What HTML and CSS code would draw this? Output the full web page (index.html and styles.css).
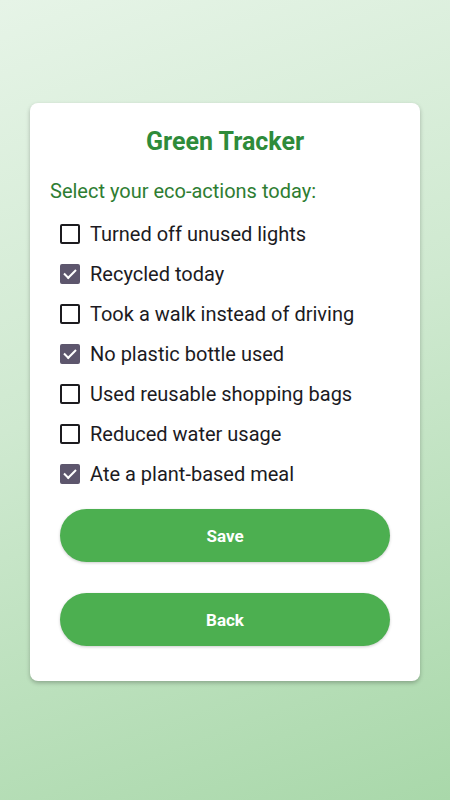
FILE: index.html
```html
<!DOCTYPE html>
<html lang="en">
<head>
    <meta charset="UTF-8">
    <meta name="viewport" content="width=device-width, initial-scale=1.0">
    <title>Green Tracker</title>
    <link rel="stylesheet" href="styles.css">
</head>
<body>
    <div class="tracker-card">
        <h2>Green Tracker</h2>
        <p class="subtitle">Select your eco-actions today:</p>

        <div class="actions">
            <label class="action"><input type="checkbox"> Turned off unused lights</label>
            <label class="action"><input type="checkbox" checked> Recycled today</label>
            <label class="action"><input type="checkbox"> Took a walk instead of driving</label>
            <label class="action"><input type="checkbox" checked> No plastic bottle used</label>
            <label class="action"><input type="checkbox"> Used reusable shopping bags</label>
            <label class="action"><input type="checkbox"> Reduced water usage</label>
            <label class="action"><input type="checkbox" checked> Ate a plant-based meal</label>
        </div>

        <button type="button" class="btn">Save</button>
        <button type="button" class="btn">Back</button>
    </div>
</body>
</html>
```

FILE: styles.css
```css
body {
    font-family: Roboto, "Noto Sans", sans-serif;
    margin: 0;
    height: 800px;
    background: linear-gradient(160deg, #e6f4e7 0%, #cfe9d0 45%, #a9d8aa 100%);
    overflow: hidden;
}
.tracker-card {
    background: #fff;
    margin: 103px 30px 0;
    padding: 25px 20px 35px;
    border-radius: 8px;
    box-shadow: 0 2px 4px rgba(0, 0, 0, 0.25);
}
h2 {
    margin: 0;
    text-align: center;
    font-size: 25px;
    line-height: 28px;
    font-weight: 700;
    color: #2e8b3a;
}
.subtitle {
    margin: 23px 0 11px;
    font-size: 20px;
    line-height: 24px;
    color: #2e7d32;
}
.actions {
    display: flex;
    flex-direction: column;
    padding-left: 10px;
}
.action {
    display: flex;
    align-items: center;
    gap: 10px;
    height: 40px;
    font-size: 20px;
    color: #1c1b1f;
}
.action input {
    appearance: none;
    margin: 0;
    width: 20px;
    height: 20px;
    border: 2px solid #1c1b1f;
    border-radius: 2px;
    display: grid;
    place-content: center;
}
.action input:checked {
    background: #5d566d;
    border-color: #5d566d;
}
.action input:checked::after {
    content: "";
    width: 10px;
    height: 5px;
    border-left: 2px solid #fff;
    border-bottom: 2px solid #fff;
    transform: translateY(-2px) rotate(-45deg);
}
.btn {
    display: block;
    width: 330px;
    height: 53px;
    margin: 15px 10px 0;
    background: #4caf50;
    border: none;
    border-radius: 27px;
    color: #fff;
    font-family: inherit;
    font-size: 17px;
    font-weight: 700;
    box-shadow: 0 1px 3px rgba(0, 0, 0, 0.2);
}
.btn + .btn {
    margin-top: 31px;
}
```
